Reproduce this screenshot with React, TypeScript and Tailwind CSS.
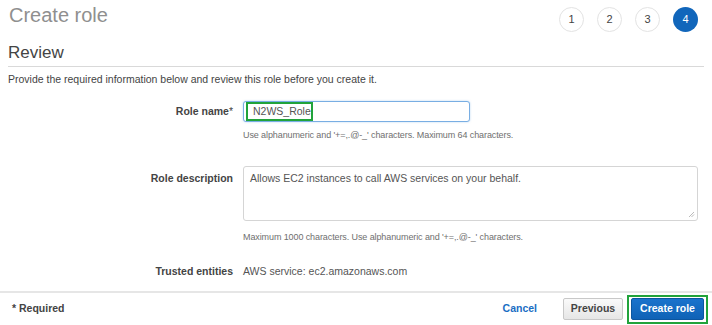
export default function App() {
  const steps = [1, 2, 3, 4];

  return (
    <div className="relative flex h-[325px] w-[712px] flex-col overflow-hidden bg-white [font-family:'Liberation_Sans',Arial,sans-serif] text-[#444]">
      {/* header */}
      <div className="flex items-start justify-between pl-2 pr-[14px]">
        <h1 className="mt-[2px] pl-[1px] text-[20px] leading-[26px] text-[#8f8f8f]">Create role</h1>
        <div className="mt-[7px] flex gap-[13px]">
          {steps.map((s) => (
            <div
              key={s}
              className={
                s === 4
                  ? "flex h-[25px] w-[25px] items-center justify-center rounded-full bg-[#1166bb] text-[11px] text-white"
                  : "flex h-[25px] w-[25px] items-center justify-center rounded-full border border-[#e3e3e3] text-[11px] text-[#444]"
              }
            >
              {s}
            </div>
          ))}
        </div>
      </div>

      <div className="px-2">
        <h2 className="mt-[10px] text-[17px] leading-[22px] text-[#444]">Review</h2>
        <div className="mt-[2px] h-px bg-[#d9d9d9]" />
        <p className="mt-[6px] text-[10.5px] leading-[13px] text-[#444]">
          Provide the required information below and review this role before you create it.
        </p>
      </div>

      {/* form */}
      <div className="mt-[15px] flex flex-col">
        <div className="flex items-start gap-[10px]">
          <div className="w-[233px] pt-[4px] text-right text-[10.5px] font-bold leading-[13px] text-[#444]">
            Role name<span className="font-normal">*</span>
          </div>
          <div className="flex flex-col">
            <div className="relative h-[21px] w-[227px] rounded-[3px] border border-[#79aee3] bg-white shadow-[0_0_2px_rgba(102,170,230,0.5)]">
              <div className="absolute left-[2px] top-0 flex h-[19px] w-[67px] items-center border-2 border-[#21a33b] pl-[5px] text-[10.5px] text-[#555]">
                N2WS_Role
              </div>
            </div>
            <p className="mt-[7px] text-[9px] leading-[12px] tracking-[-0.1px] text-[#6f6f6f]">
              Use alphanumeric and '+=,.@-_' characters. Maximum 64 characters.
            </p>
          </div>
        </div>

        <div className="mt-[25px] flex items-start gap-[10px]">
          <div className="w-[233px] pt-[6px] text-right text-[10.5px] font-bold leading-[13px] text-[#444]">
            Role description
          </div>
          <div className="flex flex-col">
            <div className="relative h-[55px] w-[455px] rounded-[3px] border border-[#d5d5d5] bg-white px-[6px] pt-[5px] text-[10.5px] leading-[13px] text-[#555]">
              Allows EC2 instances to call AWS services on your behalf.
              <svg className="absolute bottom-[2px] right-[2px]" width="7" height="7" viewBox="0 0 7 7">
                <path d="M1 6 L6 1 M3.5 6 L6 3.5" stroke="#aaa" strokeWidth="0.8" />
              </svg>
            </div>
            <p className="mt-[10px] text-[9px] leading-[12px] tracking-[-0.1px] text-[#6f6f6f]">
              Maximum 1000 characters. Use alphanumeric and '+=,.@-_' characters.
            </p>
          </div>
        </div>

        <div className="mt-[22px] flex items-center gap-[10px]">
          <div className="w-[233px] text-right text-[10.5px] font-bold leading-[13px] text-[#444]">Trusted entities</div>
          <div className="text-[10.5px] leading-[13px] text-[#555]">AWS service: ec2.amazonaws.com</div>
        </div>
      </div>

      {/* footer */}
      <div className="mt-auto flex h-[34px] items-center border-t-2 border-[#e6e6e6] pl-[12px] pr-[4px]">
        <span className="text-[10.5px] font-bold text-[#444]">* Required</span>
        <div className="ml-auto flex items-center">
          <button className="mr-[26px] text-[10.5px] font-bold text-[#1a6ec4]">Cancel</button>
          <button className="mr-[4px] h-[22px] w-[60px] rounded-[2px] border border-[#c8c8c8] bg-gradient-to-b from-[#fafafa] to-[#e6e6e6] text-[10.5px] font-bold text-[#444]">
            Previous
          </button>
          <div className="flex h-[29px] w-[81px] items-center justify-center border-2 border-[#21a33b] bg-white">
            <button className="h-[22px] w-[73px] rounded-[2px] border border-[#0c56a0] bg-gradient-to-b from-[#1a73cc] to-[#0f62b6] text-[10.5px] font-bold text-white">
              Create role
            </button>
          </div>
        </div>
      </div>
    </div>
  );
}
